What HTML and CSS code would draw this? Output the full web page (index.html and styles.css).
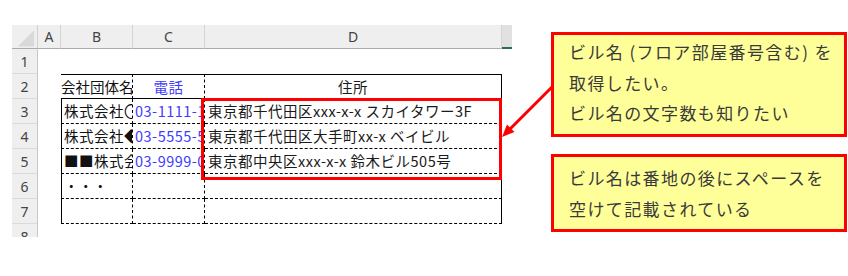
FILE: index.html
```html
<!DOCTYPE html>
<html lang="ja">
<head>
<meta charset="utf-8">
<link rel="stylesheet" href="styles.css">
</head>
<body>
<div class="page">
  <div class="sheet">
    <div class="corner"><svg width="26" height="24" viewBox="0 0 26 24"><polygon points="6,22 23,22 23,5" fill="#d9d9d9"/></svg></div>
    <div class="ch">A</div>
    <div class="ch">B</div>
    <div class="ch">C</div>
    <div class="ch">D</div>
    <div class="ch ch-sel"></div>

    <div class="rh">1</div><div class="c"></div><div class="c"></div><div class="c"></div><div class="c"></div><div class="c"></div>

    <div class="rh">2</div><div class="c"></div>
    <div class="c b r2">会社団体名</div>
    <div class="c p r2 ctr">電話</div>
    <div class="c d r2 ctr">住所</div>
    <div class="c"></div>

    <div class="rh">3</div><div class="c"></div>
    <div class="c b rd">株式会社〇〇</div>
    <div class="c p rd">03-1111-1111</div>
    <div class="c d rd">東京都千代田区xxx-x-x スカイタワー3F</div>
    <div class="c"></div>

    <div class="rh">4</div><div class="c"></div>
    <div class="c b rd">株式会社◆◆</div>
    <div class="c p rd">03-5555-5555</div>
    <div class="c d rd">東京都千代田区大手町xx-x ベイビル</div>
    <div class="c"></div>

    <div class="rh">5</div><div class="c"></div>
    <div class="c b rd">■■株式会社</div>
    <div class="c p rd">03-9999-0000</div>
    <div class="c d rd">東京都中央区xxx-x-x 鈴木ビル505号</div>
    <div class="c"></div>

    <div class="rh">6</div><div class="c"></div>
    <div class="c b rd dots">・・・</div>
    <div class="c p rd"></div>
    <div class="c d rd"></div>
    <div class="c"></div>

    <div class="rh">7</div><div class="c"></div>
    <div class="c b rd"></div>
    <div class="c p rd"></div>
    <div class="c d rd"></div>
    <div class="c"></div>

    <div class="rh">8</div><div class="c"></div><div class="c"></div><div class="c"></div><div class="c"></div><div class="c"></div>

    <div class="hilite"></div>
  </div>

  <div class="notes">
    <div class="note n1">ビル名 (フロア部屋番号含む) を<br>取得したい。<br>ビル名の文字数も知りたい</div>
    <div class="note n2">ビル名は番地の後にスペースを<br>空けて記載されている</div>
  </div>

  <svg class="arrow" width="848" height="276" viewBox="0 0 848 276">
    <line x1="553" y1="86" x2="510" y2="129" stroke="#ff0000" stroke-width="3"/>
    <polygon points="502,137 514.5,132 507,124.5" fill="#ff0000"/>
  </svg>
</div>
</body>
</html>
```

FILE: styles.css
```css
html, body {
  margin: 0;
  padding: 0;
  background: #ffffff;
}

.page {
  position: relative;
  width: 848px;
  height: 276px;
  display: flex;
  align-items: flex-start;
  font-family: "Noto Sans CJK JP", "Noto Sans", sans-serif;
}

.sheet {
  position: relative;
  margin: 25px 0 0 12px;
  width: 500px;
  height: 212px;
  overflow: hidden;
  display: grid;
  grid-template-columns: 26px 23px 72px 72px 297px 10px;
  grid-template-rows: 24px repeat(8, 25px);
  background: #ffffff;
}

.corner {
  background: #efefef;
  border-right: 1px solid #d0d0d0;
  border-bottom: 1px solid #ababab;
  box-sizing: border-box;
  display: flex;
}

.ch {
  background: #efefef;
  border-right: 1px solid #d4d4d4;
  border-bottom: 1px solid #ababab;
  box-sizing: border-box;
  display: flex;
  align-items: center;
  justify-content: center;
  font-family: "Noto Sans", "Liberation Sans", sans-serif;
  font-size: 14px;
  color: #444444;
  padding-bottom: 1px;
}

.ch-sel {
  background: #e1e1e1;
  border-right: none;
  border-bottom: 2px solid #217346;
}

.rh {
  background: #efefef;
  border-right: 1px solid #c6c6c6;
  border-bottom: 1px solid #dadada;
  box-sizing: border-box;
  display: flex;
  align-items: center;
  justify-content: center;
  font-family: "Noto Sans", "Liberation Sans", sans-serif;
  font-size: 14px;
  color: #444444;
}

.c {
  box-sizing: border-box;
  white-space: nowrap;
  overflow: hidden;
  font-size: 14.5px;
  letter-spacing: 0.5px;
  line-height: 24px;
  color: #111111;
}

.b { padding-left: 2px; }
.p { color: #3d3dff; padding-left: 2px; }
.d { padding-left: 3px; color: #1a1a1a; }
.ctr { text-align: center; padding-left: 0; }

.r2 { border-top: 1px solid #000; border-bottom: 1px solid #000; }
.r2.b { border-right: 1px dashed #000; padding-left: 0; letter-spacing: 0; }
.r2.p { border-right: 1px dashed #000; }
.r2.d { border-right: 1px solid #000; }

.rd { border-bottom: 1px dashed #000; }
.rd.b { border-left: 1px solid #000; border-right: 1px dashed #000; }
.rd.p { border-right: 1px dashed #000; }
.rd.d { border-right: 1px solid #000; }

.dots { padding-left: 2px; letter-spacing: 0; }

.hilite {
  position: absolute;
  left: 189px;
  top: 73px;
  width: 301px;
  height: 82px;
  border: 3px solid #ff0000;
  box-sizing: border-box;
}

.notes {
  margin: 32px 0 0 39px;
  display: flex;
  flex-direction: column;
  gap: 17px;
}

.note {
  width: 296px;
  box-sizing: border-box;
  background: #ffff99;
  border: 3px solid #ff0000;
  padding-left: 15px;
  font-size: 17px;
  letter-spacing: 1.4px;
  line-height: 30.5px;
  color: #3a3a3a;
}

.n1 { height: 105px; padding-top: 2px; }
.n2 { height: 78px; padding-top: 6px; }

.arrow {
  position: absolute;
  left: 0;
  top: 0;
  pointer-events: none;
}
```
